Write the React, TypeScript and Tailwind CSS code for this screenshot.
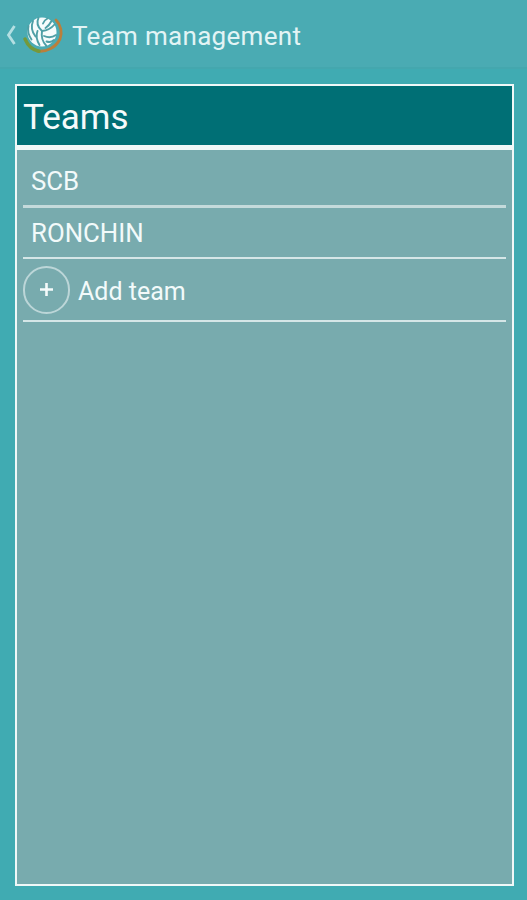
import React from "react";

function Logo() {
  return (
    <svg width="42" height="39" viewBox="0 0 42 39" className="shrink-0">
      <path d="M14 36 C24 37.5 33 32 37 24 C39.5 18 38 10 33 5" fill="none" stroke="#b97f3c" strokeWidth="2.8" strokeLinecap="round" />
      <path d="M2 24 C5 31 9 35 16 36.2" fill="none" stroke="#74993a" strokeWidth="3.4" strokeLinecap="round" />
      <circle cx="19" cy="17" r="14.5" fill="#f6fcfc" />
      <g fill="none" stroke="#4f9fa6" strokeWidth="1.9" strokeLinecap="round">
        <path d="M19 16 C14.5 12 13.5 7 15.5 2.8" />
        <path d="M19 16 C24.5 15.5 29 12.5 31.5 9.5" />
        <path d="M19 16 C18 22 19.5 27 23.5 31" />
        <path d="M20 8.5 C21 6 22.5 4.5 24.5 3.5" />
        <path d="M22.5 13 C25.5 11 27.5 8 28.5 6" />
        <path d="M10 6 C8 11 9 17 12.5 21.5" />
        <path d="M5.5 11 C4.5 15 5.5 20 8.5 24.5" />
        <path d="M14.5 16 C13 20 13.5 25 16.5 30" />
        <path d="M21 21 C25.5 23 29.5 22.5 33 20" />
        <path d="M23.5 26.5 C26.5 27.5 29 27 31 25" />
      </g>
    </svg>
  );
}

export default function App() {
  return (
    <div className="w-[527px] h-[900px] flex flex-col overflow-hidden bg-[#40abb2] font-['Roboto',sans-serif] text-[#f2fafa]">
      <header className="h-[69px] shrink-0 flex items-center bg-[#4aabb3] border-b-2 border-[#44a7ae]">
        <svg width="10" height="22" viewBox="0 0 10 22" className="ml-[6px] mt-[2px] shrink-0">
          <path d="M8.5 2 L2.5 11 L8.5 20" fill="none" stroke="#b4dfe2" strokeWidth="2.8" />
        </svg>
        <div className="ml-[7px] mt-[2px]">
          <Logo />
        </div>
        <span className="ml-[7px] pt-[4px] text-[26px] leading-none tracking-[0.3px] text-[#e2f4f5]">Team management</span>
      </header>
      <main className="flex-1 pt-[15px] pb-[14px] pl-[15px] pr-[13px] min-h-0">
        <section className="h-full border-2 border-[#f0f8f8] bg-[#78abae] flex flex-col">
          <h1 className="h-[59px] shrink-0 flex items-center pl-[6px] pt-[4px] bg-[#006f75] text-[35px] leading-none font-normal text-[#f5fbfb]">
            Teams
          </h1>
          <div className="h-[5px] shrink-0 bg-[#f0f8f8]" />
          <ul className="px-[6px] text-[25.8px] leading-none">
            <li className="h-[58px] flex items-center pl-[8px] pt-[8px] border-b-[3px] border-[#c4dadb]">SCB</li>
            <li className="h-[51px] flex items-center pl-[8px] pt-[3px] border-b-2 border-[#d5e6e7]">RONCHIN</li>
            <li className="h-[63px] flex items-center border-b-2 border-[#d5e6e7]">
              <span className="w-[47px] h-[48px] rounded-full border-2 border-[#bcd6d8] flex items-center justify-center shrink-0">
                <svg width="13" height="13" viewBox="0 0 13 13">
                  <path d="M6.5 0 V13 M0 6.5 H13" stroke="#f5fbfb" strokeWidth="2.6" />
                </svg>
              </span>
              <span className="ml-[8px] pt-[4px] text-[25px]">Add team</span>
            </li>
          </ul>
        </section>
      </main>
    </div>
  );
}
